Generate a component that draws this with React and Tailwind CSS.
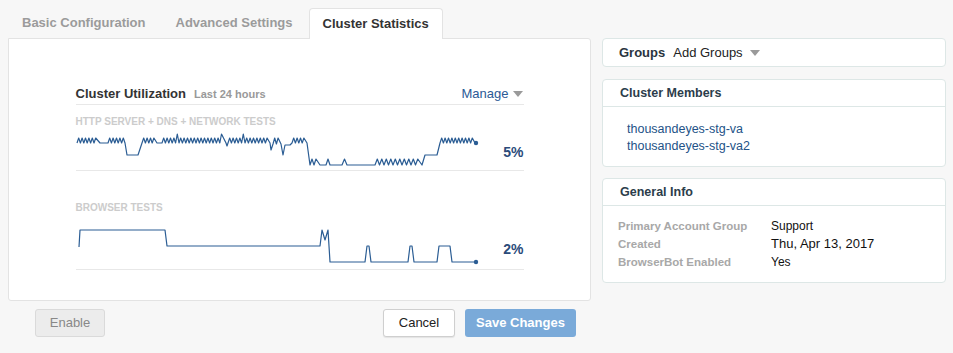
import React from "react";

function buildChart1() {
  const p = [];
  const L = (x, y) => p.push([x, y]);
  const Z = (x0, x1, base, peak, per = 3.4, spikes = []) => {
    for (let x = x0; x + per <= x1 + 0.01; x += per) {
      L(x, base);
      const mid = x + per / 2;
      const sp = spikes.some((s) => Math.abs(s - mid) < per / 2);
      L(mid, sp ? peak - 4 : peak);
    }
    L(x1, base);
  };
  L(1, 13);
  Z(1, 24, 13, 8);
  L(32, 13);
  Z(32, 49, 13, 8);
  L(51, 25);
  L(62, 25);
  L(66, 13);
  Z(66, 81, 13, 8);
  L(86, 13);
  Z(86, 150, 13, 8, 3.4, [103, 146]);
  L(151, 16);
  Z(152, 194, 13, 8, 3.4, [168]);
  L(195, 20);
  Z(197, 205, 14, 8);
  L(207, 25);
  L(209, 15);
  L(214, 15);
  Z(216, 231, 13, 8);
  L(234, 35);
  Z(234, 244, 35, 29, 4);
  L(250, 35);
  Z(250, 254, 35, 29, 4);
  L(266, 35);
  Z(266, 271, 35, 29, 5);
  L(299, 35);
  Z(299, 346, 35, 29, 4.5);
  L(349, 25);
  L(361, 25);
  L(364, 13);
  Z(364, 399, 13, 8);
  L(400, 13);
  return p.map((q, i) => (i ? "L" : "M") + q[0].toFixed(1) + " " + q[1]).join(" ");
}

const chart1 = buildChart1();
const chart2 =
  "M3 29 L4 12 L89 12 L91 28 L244 28 L246 12 L249 22 L252 12 L254 44 L289 44 L291 28 L293 28 L295 44 L332 44 L334 28 L336 28 L338 44 L361 44 L363 28 L374 28 L376 44 L400 44";

function Caret({ className }) {
  return (
    <svg width="10" height="6" viewBox="0 0 10 6" className={className}>
      <path d="M0 0 L10 0 L5 6 Z" fill="#9a9a9a" />
    </svg>
  );
}

export default function App() {
  return (
    <div
      className="w-[953px] h-[353px] bg-[#f7f7f7] flex items-start pl-[8px] pt-[8px] overflow-hidden"
      style={{ fontFamily: '"Liberation Sans", Arial, sans-serif' }}
    >
      {/* left column */}
      <div className="w-[583px] shrink-0 flex flex-col">
        <div className="flex h-[30px] items-end">
          <div className="h-[30px] px-[14px] flex items-center text-[13px] font-bold text-[#9b9b9b]">
            Basic Configuration
          </div>
          <div className="ml-[2px] h-[30px] px-[14px] flex items-center text-[13px] font-bold text-[#9b9b9b]">
            Advanced Settings
          </div>
          <div className="ml-[2px] relative z-10 -mb-px h-[31px] pb-px px-[13px] flex items-center text-[13px] font-bold text-[#333] bg-white border border-b-0 border-[#e3e3e3] rounded-t-[4px]">
            Cluster Statistics
          </div>
        </div>
        <div className="bg-white border border-[#e3e3e3] rounded-b-[3px] rounded-tr-[3px] h-[263px] flex justify-center pt-[45px]">
          <div className="w-[448px] flex flex-col">
            <div className="h-[21px] border-b border-[#e8e8e8] flex items-baseline leading-[20px]">
              <span className="text-[13px] font-bold text-[#333]">Cluster Utilization</span>
              <span className="ml-[8px] text-[11px] font-bold text-[#999]">Last 24 hours</span>
              <span className="ml-auto text-[13px] text-[#2b5a96]">Manage</span>
              <Caret className="ml-[4px] mr-[1px] self-center" />
            </div>
            <div className="mt-[11px] h-[12px] leading-[12px] text-[10px] font-bold text-[#cccccc]">
              HTTP SERVER + DNS + NETWORK TESTS
            </div>
            <div className="mt-[2px] h-[41px] border-b border-[#e8e8e8] flex">
              <svg width="404" height="40" viewBox="0 0 404 40" className="shrink-0">
                <path d={chart1} fill="none" stroke="#2b5d94" strokeWidth="1.2" strokeLinejoin="round" />
                <circle cx="400" cy="13" r="2.2" fill="#2b5d94" />
              </svg>
              <div className="flex-1 text-right pt-[13px] text-[14px] leading-[18px] font-bold text-[#2b4b7a]">5%</div>
            </div>
            <div className="mt-[31px] h-[12px] leading-[12px] text-[10px] font-bold text-[#cccccc]">
              BROWSER TESTS
            </div>
            <div className="mt-[4px] h-[52px] border-b border-[#e8e8e8] flex">
              <svg width="404" height="51" viewBox="0 0 404 51" className="shrink-0">
                <path d={chart2} fill="none" stroke="#2b5d94" strokeWidth="1.2" strokeLinejoin="round" />
                <circle cx="400" cy="44" r="2.2" fill="#2b5d94" />
              </svg>
              <div className="flex-1 text-right pt-[22px] text-[14px] leading-[18px] font-bold text-[#2b4b7a]">2%</div>
            </div>
          </div>
        </div>
        <div className="mt-[8px] flex items-center pr-[15px]">
          <div className="ml-[27px] w-[70px] h-[28px] flex items-center justify-center rounded-[3px] border border-[#dadada] bg-[#ececec] text-[13px] text-[#888]">
            Enable
          </div>
          <div className="ml-auto w-[72px] h-[28px] flex items-center justify-center rounded-[3px] border border-[#cfcfcf] bg-white text-[13px] text-[#222] shadow-[0_1px_1px_rgba(0,0,0,0.08)]">
            Cancel
          </div>
          <div className="ml-[10px] w-[111px] h-[28px] flex items-center justify-center rounded-[3px] bg-[#7aaad9] text-[13px] font-bold text-white">
            Save Changes
          </div>
        </div>
      </div>

      {/* right column */}
      <div className="ml-[11px] w-[344px] mt-[30px] flex flex-col">
        <div className="h-[29px] bg-white border border-[#dde7e6] rounded-[4px] flex items-center pl-[16px]">
          <span className="text-[13px] font-bold text-[#2a3540]">Groups</span>
          <span className="ml-[8px] text-[13px] text-[#222]">Add Groups</span>
          <Caret className="ml-[7px]" />
        </div>
        <div className="mt-[12px] h-[88px] bg-white border border-[#dde7e6] rounded-[4px] flex flex-col">
          <div className="h-[27px] border-b border-[#dde7e6] flex items-center pl-[17px] text-[12.5px] font-bold text-[#2c3d4b]">
            Cluster Members
          </div>
          <div className="pt-[14px] pl-[24px] text-[12.5px] leading-[17px] text-[#235287]">
            <div>thousandeyes-stg-va</div>
            <div>thousandeyes-stg-va2</div>
          </div>
        </div>
        <div className="mt-[11px] h-[105px] bg-white border border-[#dde7e6] rounded-[4px] flex flex-col">
          <div className="h-[27px] border-b border-[#dde7e6] flex items-center pl-[17px] text-[12.5px] font-bold text-[#2c3d4b]">
            General Info
          </div>
          <div className="pt-[11px] pl-[15px] leading-[18px]">
            <div className="flex items-baseline">
              <span className="w-[153px] text-[11.5px] font-bold text-[#a8a8a8]">Primary Account Group</span>
              <span className="text-[12px] text-[#111]">Support</span>
            </div>
            <div className="flex items-baseline">
              <span className="w-[153px] text-[11.5px] font-bold text-[#a8a8a8]">Created</span>
              <span className="text-[13px] text-[#111]">Thu, Apr 13, 2017</span>
            </div>
            <div className="flex items-baseline">
              <span className="w-[153px] text-[11.5px] font-bold text-[#a8a8a8]">BrowserBot Enabled</span>
              <span className="text-[12px] text-[#111]">Yes</span>
            </div>
          </div>
        </div>
      </div>
    </div>
  );
}
